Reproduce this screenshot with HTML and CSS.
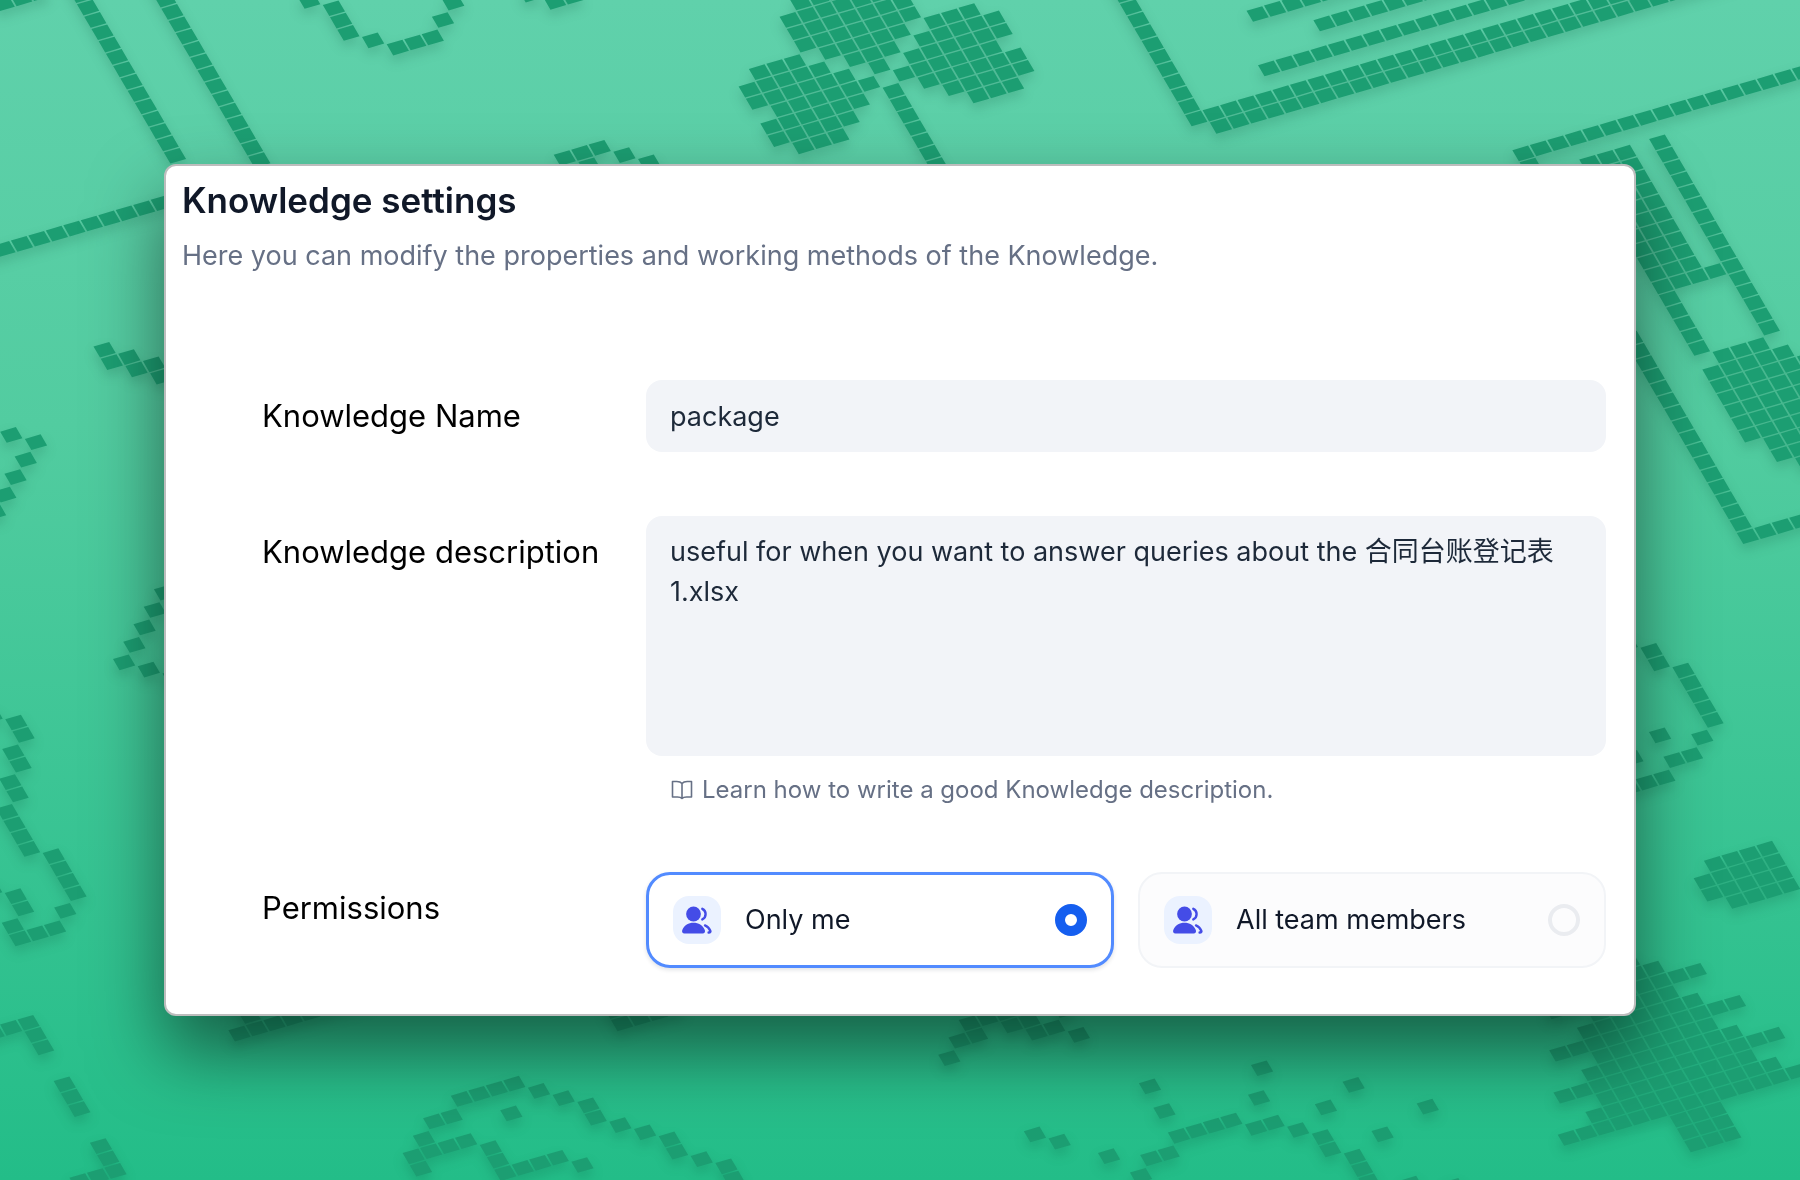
FILE: index.html
```html
<!DOCTYPE html>
<html lang="en">
<head>
<meta charset="utf-8">
<meta name="viewport" content="width=device-width, initial-scale=1">
<title>Knowledge settings</title>
<link rel="stylesheet" href="styles.css">
</head>
<body>
<svg class="backdrop" viewBox="0 0 1800 1180" preserveAspectRatio="xMidYMid slice" aria-hidden="true">
  <!-- Tiles on a slanted lattice: one unit is one tile, each run is a dashed line -->
  <g class="tiles">
    <g transform="matrix(17.47 -5.09 7.24 12.35 167.1 158.2)">
      <!-- top left -->
      <path d="M-4-14h3M-12 3h12M13-4h.9M14-3h3M17-4h.9M18-5h.9M22-4h.9M23-3h2M19 8h3M20 9h.9M22 9h.9M23 10h.9"/>
      <!-- clover -->
      <path d="M35 2h5M34 3h6M34 4h7M34 5h7M35 6h5M36 7h3M37 8h.9M41 6h3M40 7h5M39 8h6M38 9h6M39 10h6M40 11h5M41 12h3M31 6h3M30 7h5M30 8h6M31 9h6M30 10h6M30 11h5M31 12h3"/>
      <!-- top right -->
      <path d="M52 18h30M52 19h30M56 16h25M60 14h20M57 12h20M66 27h20M66 58h10"/>
      <path d="M69 29h3M69 30h3M69 31h3M69 32h3M69 33h3M69 34h3M69 35h3M69 36h3M69 37h3M69 38h3M69 39h4"/>
      <path d="M70 45h3M69 46h5M69 47h6M69 48h6M69 49h6M69 50h6M69 51h6M70 52h5M70 53h5M71 54h3M72 55h2"/>
      <!-- left edge -->
      <path d="M-16 16h.9M-15 17h.9M-16 18h.9M-17 19h.9M-18 20h.9M-19 21h.9M-13 30h.9M-14 31h.9M-15 32h.9M-16 33h.9M-17 34h.9M-16 35h.9M-15 36h.9M-25 35h.9M-27 50h.9M-28 51h.9M-30 51h2M-30 50h.9M-30 47h.9M-34 57h3M-34 69h3"/>
      <!-- bottom left -->
      <path d="M-22 62h8M-3 69h4M-3 68h.9M-13 71h4M-9 72h.9M-8 73h.9M-6 76h.9M-5 77h.9M-3 80h.9M-11 73h.9M-15 72h2M-16 73h.9M-17 74h4M-17 75h.9M-13 77h4M-9 78h.9"/>
      <!-- bottom centre -->
      <path d="M12 78h.9M13 77h2M14 76h4M16 77h2M17 78h2M19 79h.9M19 77h.9M21 84h.9M21 86h.9M27 85h.9M26 87h.9M31 88h.9M29 89h.9M31 92h.9M14 85h.9M15 86h.9M17 88h.9M19 89h2M18 90h.9M21 88h4M25 89h2M27 90h.9M31 96h.9M33 97h.9M34 91h.9"/>
      <!-- right edge -->
      <path d="M57 63h.9M58 71h.9M56 72h2M56 70h.9M54 71h.9M53 73h3M55 80h4M54 81h5M54 82h5M55 83h4"/>
      <!-- tree -->
      <path d="M48 85h.9M47 86h3M43 87h9M45 88h5M44 89h7M42 90h11M44 91h7M43 92h9M41 93h13M43 94h9M42 95h11M40 96h15M46 97h3M46 98h3M46 99h3"/>
    </g>
    <g transform="matrix(17.47 -5.09 7.24 12.35 171.7 150.2)">
      <path d="M0-14v15M4-14v17M11-8v.9M12-7v3M-9 12v2M-8 13v2M-7 14v2M37 10v8M51 5v14M66 28v30M73 29v16M69 40v5"/>
      <path d="M-24 36v2M-25 38v2M-26 40v2M-27 42v4M-26 46v4M-29 48v2M-32 58v2M-32 62v3M-32 67v2M-21 60v2M-7 74v2M-4 78v2M-2 81v2M-13 75v2M28 91v2M29 93v3M58 64v2M59 66v5"/>
    </g>
  </g>
</svg>

<main class="card">
  <header class="head">
    <h1 class="title">Knowledge settings</h1>
    <p class="subtitle">Here you can modify the properties and working methods of the Knowledge.</p>
  </header>

  <form class="form">
    <div class="row">
      <label class="label" for="name">Knowledge Name</label>
      <input class="field" id="name" type="text" value="package">
    </div>

    <div class="row">
      <label class="label" for="description">Knowledge description</label>
      <div class="control">
        <textarea class="field field-area" id="description" spellcheck="false">useful for when you want to answer queries about the 合同台账登记表 1.xlsx</textarea>
        <a class="help" href="#">
          <svg class="help-icon" viewBox="0 0 24 24" aria-hidden="true"><path d="M12 5.500C10.800 4 9 3.500 6.800 3.500H2.500v15.500h5c2 0 3.500.4 4.500 1.500 1-1.100 2.500-1.500 4.500-1.500h5V3.500h-4.300C15 3.500 13.200 4 12 5.500V20.500"/></svg>
          Learn how to write a good Knowledge description.
        </a>
      </div>
    </div>

    <div class="row" role="radiogroup" aria-labelledby="permissions">
      <span class="label" id="permissions">Permissions</span>
      <div class="options">
        <label class="option">
          <svg class="option-icon" viewBox="0 0 48 48" aria-hidden="true"><use href="#users"/></svg>
          <span class="option-name">Only me</span>
          <input class="radio" type="radio" name="permission" checked>
        </label>
        <label class="option">
          <svg class="option-icon" viewBox="0 0 48 48" aria-hidden="true"><use href="#users"/></svg>
          <span class="option-name">All team members</span>
          <input class="radio" type="radio" name="permission">
        </label>
      </div>
    </div>
  </form>
</main>

<svg class="symbols" aria-hidden="true">
  <symbol id="users" viewBox="0 0 48 48">
    <circle cx="20.500" cy="18" r="7.400" fill="#444ce7"/>
    <path fill="#444ce7" d="M20.500 26.700c5 0 9.200 2.500 11.300 7.200.8 1.800-.3 3.500-2.200 3.500H11.500c-1.900 0-3-1.700-2.200-3.500 2-4.700 6.200-7.200 11.200-7.200z"/>
    <path fill="none" stroke="#444ce7" stroke-width="2.400" stroke-linecap="round" d="M29.300 12.800c4.400 2 4.400 8.600 0 10.600M32 29.400c2.600 1 4.300 3.200 5.300 5.400.5 1.100-.3 1.800-1.700 1.700"/>
  </symbol>
</svg>
</body>
</html>
```
FILE: styles.css
```css
* {
  box-sizing: border-box;
}

body {
  margin: 0;
  min-height: 100vh;
  padding: 164px;
  background: linear-gradient(#60d1ab 0%, #52cca0 36%, #23bd88 100%) fixed;
  font-family: Inter, "Noto Sans CJK SC", sans-serif;
  color: #101828;
}

.backdrop {
  position: fixed;
  inset: 0;
  z-index: -1;
  width: 100%;
  height: 100%;
}

.tiles {
  fill: none;
  stroke: #1c9e72;
  stroke-width: .9;
  stroke-dasharray: .9 .1;
  filter: drop-shadow(0 6px 6px rgba(0, 60, 40, .18));
}

.symbols {
  display: none;
}

.card {
  padding: 14px 28px 46px 16px;
  border: 2px solid #bdbdbd;
  border-radius: 12px;
  background: #fff;
  box-shadow: 0 36px 72px rgba(0, 0, 0, .5);
}

.title {
  margin: 0;
  font-size: 35px;
  font-weight: 600;
  line-height: 40px;
}

.subtitle {
  margin: 16px 0 0;
  font-size: 27px;
  line-height: 40px;
  color: #667085;
}

.form {
  display: flex;
  flex-direction: column;
  gap: 64px;
  margin-top: 104px;
  padding-left: 80px;
}

.row {
  display: grid;
  grid-template-columns: 384px 1fr;
  align-items: start;
}

.label {
  font-size: 31px;
  line-height: 72px;
  color: #000;
}

.control {
  display: flex;
  flex-direction: column;
  align-items: flex-start;
  gap: 16px;
}

.field {
  display: block;
  width: 100%;
  height: 72px;
  padding: 16px 24px;
  border: 0;
  border-radius: 16px;
  outline: 0;
  background: #f2f4f8;
  font: inherit;
  font-size: 27px;
  line-height: 40px;
  color: #1d2939;
}

.field-area {
  height: 240px;
  resize: none;
}

.help {
  display: flex;
  align-items: center;
  gap: 8px;
  padding-left: 24px;
  font-size: 24px;
  line-height: 36px;
  color: #667085;
  text-decoration: none;
}

.help-icon {
  width: 24px;
  height: 24px;
  fill: none;
  stroke: currentColor;
  stroke-width: 1.6;
  stroke-linejoin: round;
}

.options {
  display: grid;
  grid-template-columns: 1fr 1fr;
  gap: 24px;
}

.option {
  display: flex;
  align-items: center;
  gap: 24px;
  height: 96px;
  padding: 0 24px;
  border: 2px solid #f2f4f7;
  border-radius: 24px;
  background: #fcfcfd;
}

.option:has(:checked) {
  border: 3px solid #528bff;
  background: #fff;
  box-shadow: 0 2px 4px rgba(16, 24, 40, .12);
}

.option-icon {
  width: 48px;
  height: 48px;
  border-radius: 16px;
  background: #ebf2ff;
}

.option-name {
  flex: 1;
  font-size: 27px;
  line-height: 40px;
}

.radio {
  appearance: none;
  width: 32px;
  height: 32px;
  margin: 0;
  border: 4px solid #eaecf0;
  border-radius: 50%;
}

.radio:checked {
  border: 10px solid #155eef;
  background: #fff;
}
```
